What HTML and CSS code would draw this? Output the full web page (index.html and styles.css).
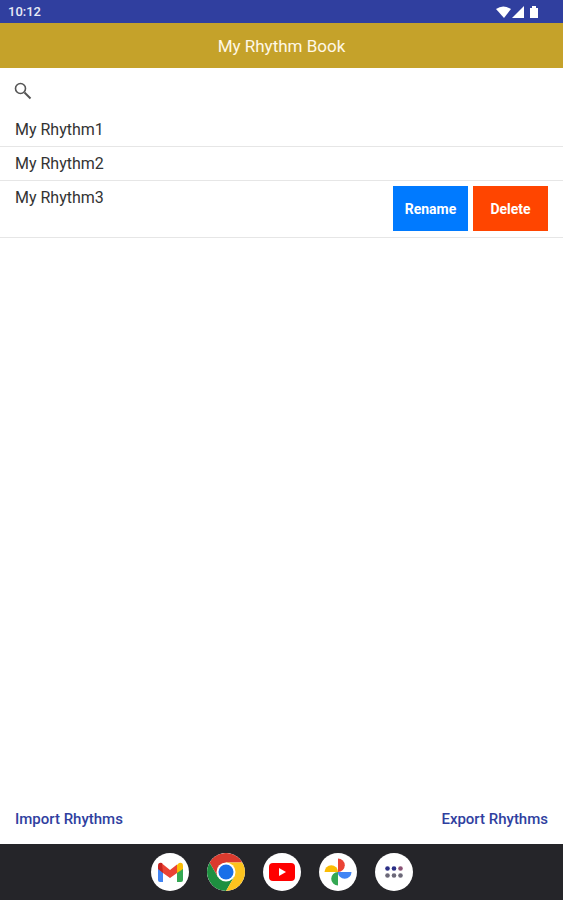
FILE: index.html
```
<!DOCTYPE html>
<html lang="en">
<head>
    <meta charset="UTF-8">
    <meta name="viewport" content="width=device-width, initial-scale=1.0">
    <title>My Rhythm Book</title>
    <link rel="stylesheet" href="styles.css">
</head>
<body>
    <!-- Status bar -->
    <div class="status-bar">
        <span>10:12</span>
        <svg class="status-icons" width="42" height="12" viewBox="0 0 42 12" fill="#fff" aria-hidden="true">
            <path d="M0 3Q7-2 15 3L8 12Z"/>
            <path d="M16 12L28 0V12Z"/>
            <path d="M34 2h2V0h4v2h2v10h-8z"/>
        </svg>
    </div>

    <!-- Title -->
    <header class="app-header">
        <h1>My Rhythm Book</h1>
    </header>

    <main>
        <!-- Search -->
        <div class="search">
            <label for="search-input" aria-label="Search">
                <svg width="18" height="18" viewBox="0 0 18 18" fill="none" stroke="#555" aria-hidden="true">
                    <circle cx="6.500" cy="6.500" r="5" stroke-width="1.600"/>
                    <path d="M10.500 10.500L16.500 16.500" stroke-width="2"/>
                </svg>
            </label>
            <input type="search" id="search-input">
        </div>

        <!-- Saved rhythms -->
        <ul class="rhythm-list">
            <li class="rhythm">
                <span>My Rhythm1</span>
            </li>
            <li class="rhythm">
                <span>My Rhythm2</span>
            </li>
            <li class="rhythm">
                <span>My Rhythm3</span>
                <div class="actions">
                    <button type="button" class="rename">Rename</button>
                    <button type="button" class="delete">Delete</button>
                </div>
            </li>
        </ul>
    </main>

    <footer class="transfer">
        <button type="button">Import Rhythms</button>
        <button type="button">Export Rhythms</button>
    </footer>

    <!-- Dock -->
    <nav class="dock">
        <a href="#" aria-label="Gmail">
            <svg viewBox="0 0 38 38">
                <path fill="#4285f4" d="M7 13l5 4v12H9q-2 0-2-2z"/>
                <path fill="#34a853" d="M26 17l6-4v14q0 2-2 2h-4z"/>
                <path fill="#fbbc04" d="M26 12l2-2q4-1 4 3v3l-6 4z"/>
                <path fill="#c5221f" d="M7 13q0-4 4-3l1 2v8l-5-4z"/>
                <path fill="#ea4335" d="M11 10.500l8 6.500 7-5.500v8.500l-7 5-7-5z"/>
            </svg>
        </a>
        <a href="#" aria-label="Chrome">
            <svg viewBox="0 0 48 48">
                <path fill="#db3b2e" d="M3.2 12A24 24 0 0 1 44.8 12H24L13.6 30Z"/>
                <path fill="#1e9040" d="M3.2 12L13.6 30H34.4L24 48A24 24 0 0 1 3.2 12Z"/>
                <path fill="#fcc31e" d="M44.8 12A24 24 0 0 1 24 48L34.4 30L24 12Z"/>
                <circle cx="24" cy="24" r="12" fill="#fff"/>
                <circle cx="24" cy="24" r="9.500" fill="#1a6fe8"/>
            </svg>
        </a>
        <a href="#" aria-label="YouTube">
            <svg viewBox="0 0 38 38">
                <rect x="6" y="10" width="26" height="18" rx="4" fill="#f00"/>
                <path fill="#fff" d="M16 15l7 4-7 4z"/>
            </svg>
        </a>
        <a href="#" aria-label="Photos">
            <svg viewBox="0 0 38 38">
                <path fill="#ea4335" d="M19 5.500a6.800 6.800 0 0 1 0 13.600z"/>
                <path fill="#4285f4" d="M32.500 19a6.800 6.800 0 0 1-13.600 0z"/>
                <path fill="#34a853" d="M19 32.500a6.800 6.800 0 0 1 0-13.600z"/>
                <path fill="#fbbc04" d="M5.500 19a6.800 6.800 0 0 1 13.600 0z"/>
            </svg>
        </a>
        <a href="#" aria-label="All apps">
            <svg viewBox="0 0 38 38">
                <g fill="#2b2f86">
                    <circle cx="12.500" cy="15.500" r="2.300"/>
                    <circle cx="19" cy="15.500" r="2.300"/>
                </g>
                <circle cx="25.500" cy="15.500" r="2.300" fill="#8a5275"/>
                <g fill="#6b6878">
                    <circle cx="12.500" cy="22.500" r="2.300"/>
                    <circle cx="19" cy="22.500" r="2.300"/>
                    <circle cx="25.500" cy="22.500" r="2.300"/>
                </g>
            </svg>
        </a>
    </nav>
</body>
</html>
```
FILE: styles.css
```
* {
    box-sizing: border-box;
}

body {
    font-family: Roboto, 'Liberation Sans', sans-serif;
    margin: 0;
    min-height: 100vh;
    display: flex;
    flex-direction: column;
    background-color: #fff;
    color: #333;
}

/* Status bar */
.status-bar {
    display: flex;
    justify-content: space-between;
    align-items: center;
    height: 23px;
    padding: 0 25px 0 8px;
    background-color: #303f9f;
    color: #e8eaf6;
    font-size: 13px;
    font-weight: 500;
}

/* Title */
.app-header {
    display: flex;
    justify-content: center;
    align-items: center;
    height: 45px;
    background-color: #c5a22a;
    color: #fff8e6;
}

.app-header h1 {
    margin: 0;
    font-size: 17px;
    font-weight: 400;
}

main {
    flex: 1;
}

/* Search */
.search {
    display: flex;
    align-items: center;
    height: 45px;
    padding: 0 15px 0 14px;
}

.search label {
    display: flex;
}

.search input {
    flex: 1;
    margin-left: 8px;
    border: none;
    outline: none;
    background: none;
    font-family: inherit;
    font-size: 16px;
}

/* Saved rhythms */
.rhythm-list {
    list-style: none;
    margin: 0;
    padding: 0;
}

.rhythm {
    display: flex;
    justify-content: space-between;
    padding: 5px 15px 4px;
    border-bottom: 1px solid #e6e6e6;
    font-size: 16px;
    line-height: 24px;
}

.rhythm .actions {
    display: flex;
    gap: 5px;
    padding-bottom: 2px;
}

.actions button {
    width: 75px;
    height: 45px;
    padding: 0;
    border: none;
    color: white;
    font-family: inherit;
    font-size: 14px;
    font-weight: 700;
    cursor: pointer;
}

.actions .rename {
    background-color: #007aff;
}

.actions .delete {
    background-color: #ff4500;
}

/* Import and export */
.transfer {
    display: flex;
    justify-content: space-between;
    padding: 15px 15px 14px;
}

.transfer button {
    padding: 0;
    border: none;
    background: none;
    color: #303f9f;
    font-family: inherit;
    font-size: 15px;
    font-weight: 500;
    line-height: 22px;
    cursor: pointer;
}

/* Dock */
.dock {
    display: flex;
    justify-content: center;
    align-items: center;
    gap: 18px;
    height: 56px;
    background-color: #252529;
}

.dock a {
    display: flex;
    width: 38px;
    height: 38px;
    border-radius: 50%;
    background-color: #fff;
    overflow: hidden;
}

.dock svg {
    width: 100%;
    height: 100%;
}
```
